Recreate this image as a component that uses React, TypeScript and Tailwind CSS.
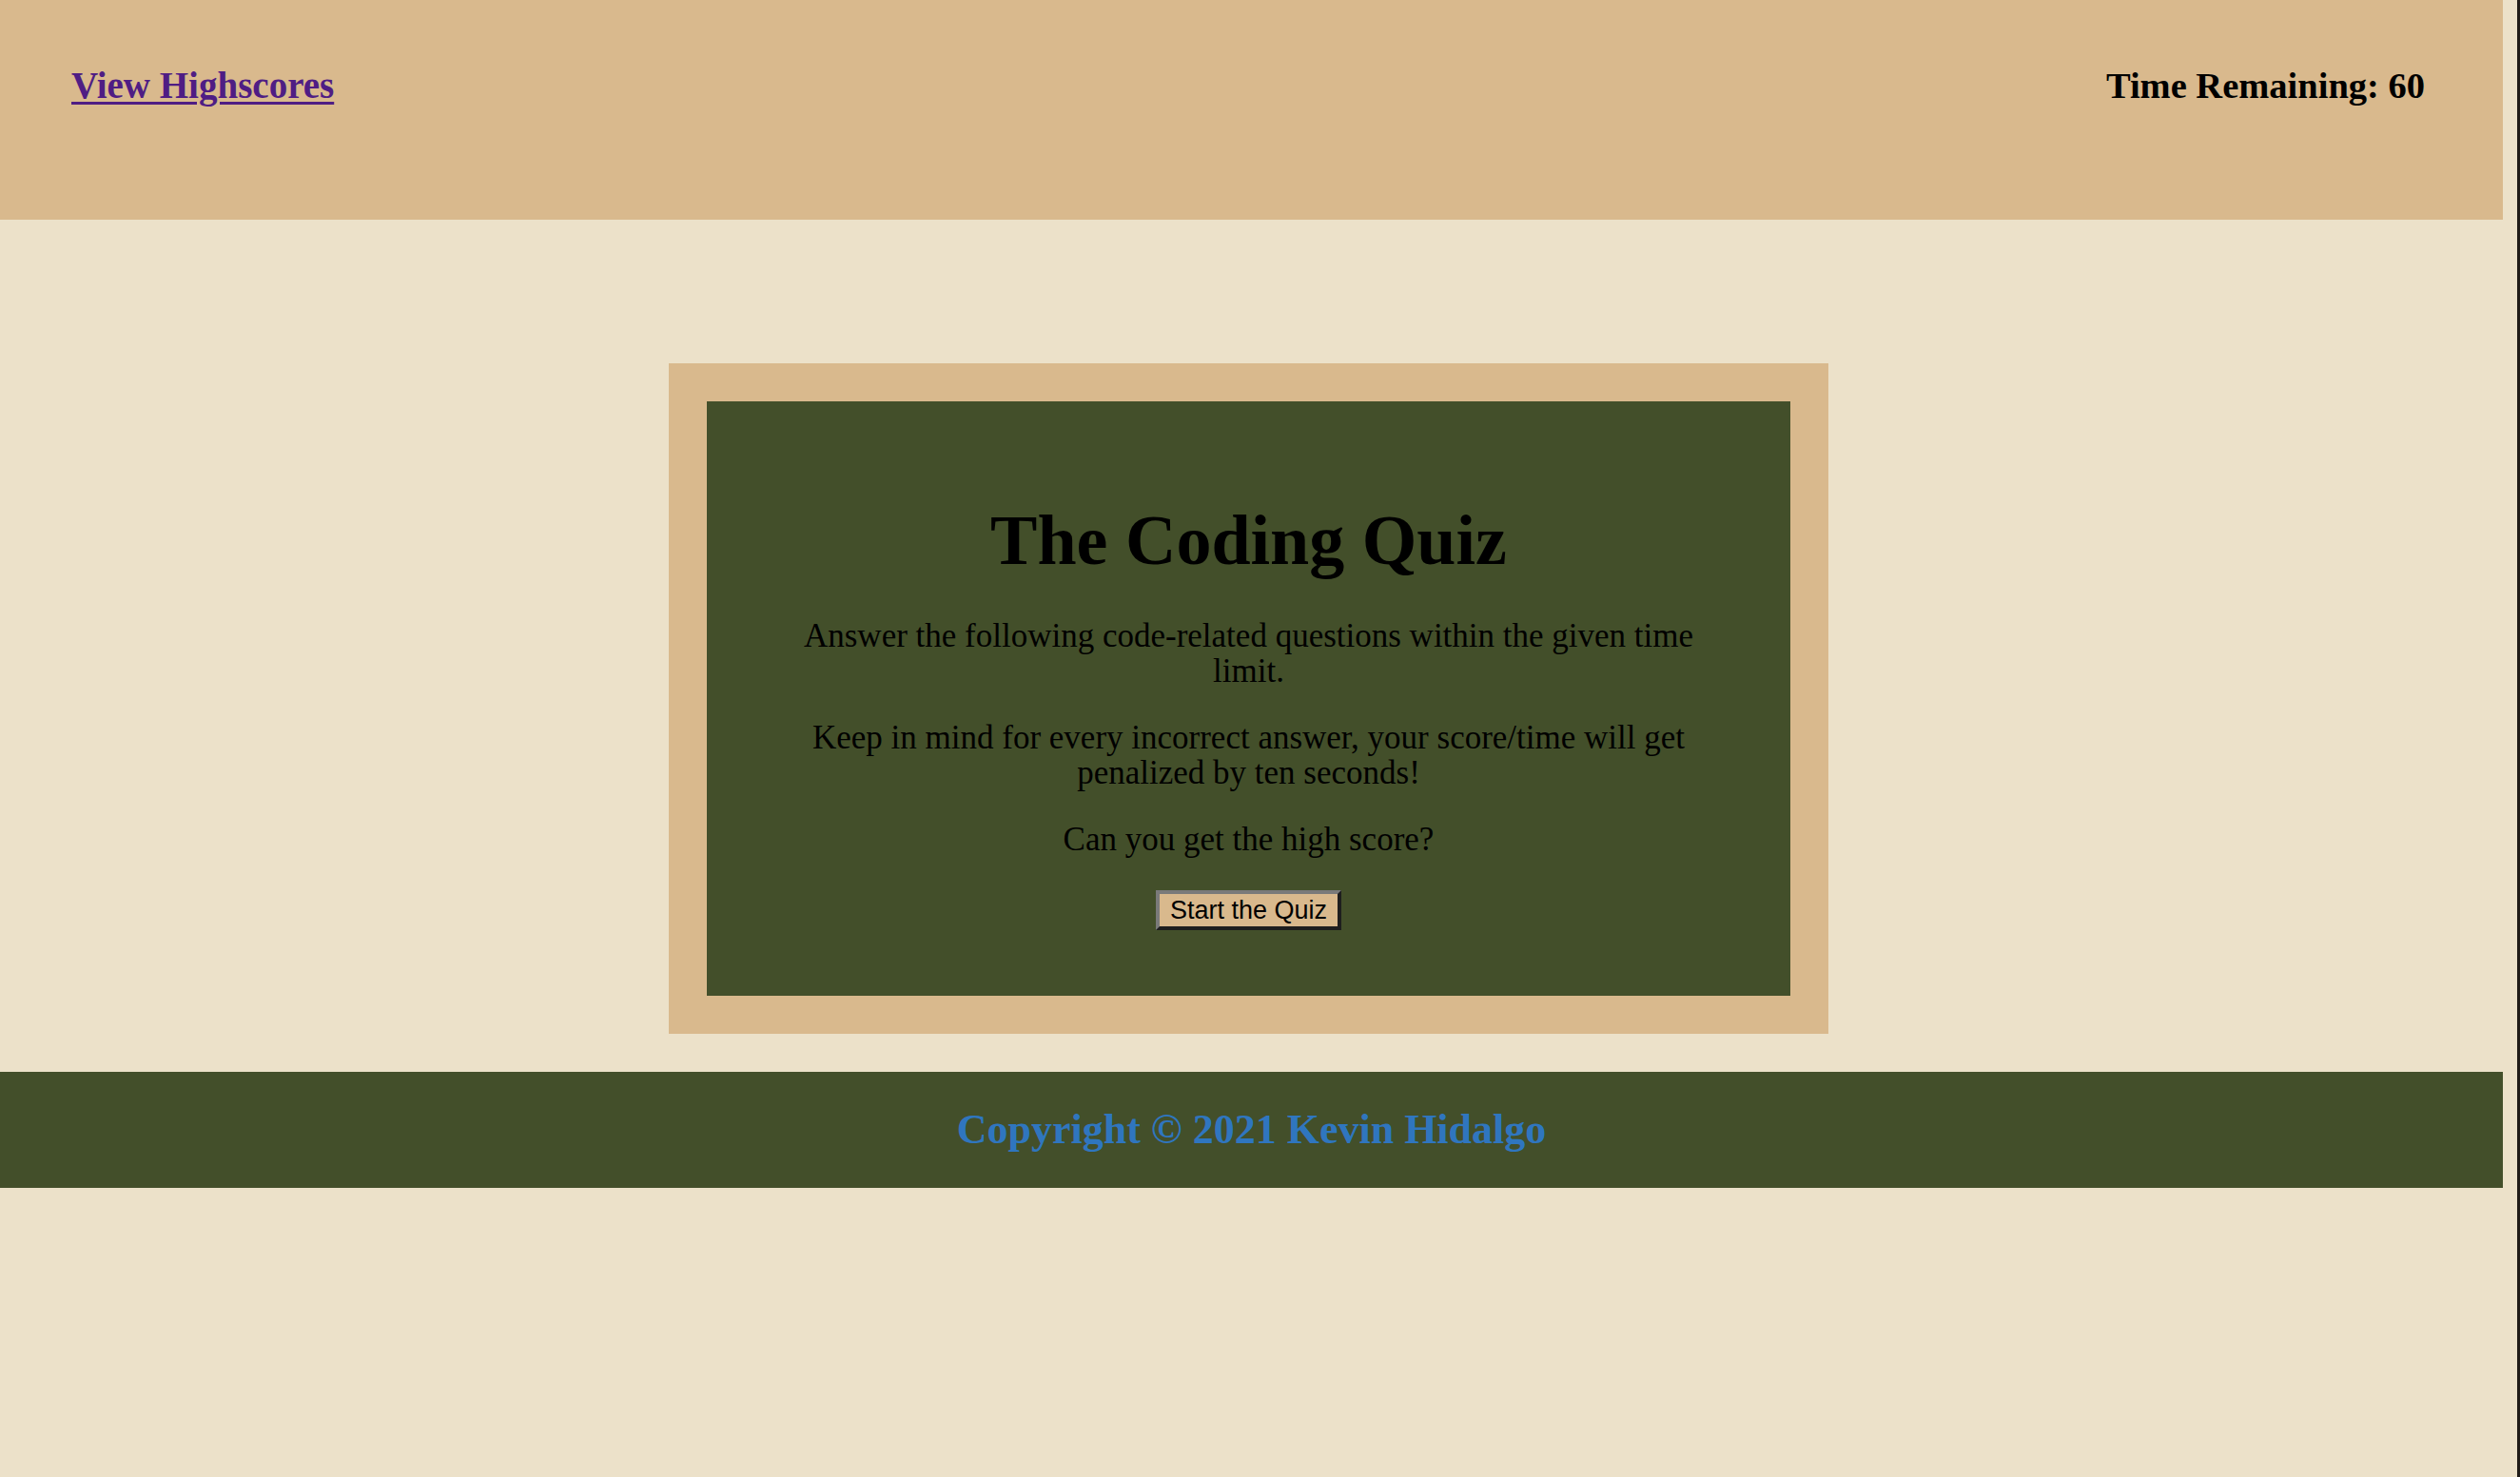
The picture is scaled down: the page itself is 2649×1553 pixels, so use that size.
import React from "react";

const serif = "font-['Liberation_Serif',_'Times_New_Roman',_serif]";

const App: React.FC = () => {
  const handleStart = () => {
    // quiz would start here
  };

  return (
    <div className="min-h-screen w-full bg-[#ECE1C9] flex border-r-[3px] border-[#1f1b17]">
      <div className={`w-[2631px] flex flex-col ${serif}`}>
        {/* Header */}
        <header className="h-[231px] bg-[#D9B98D] flex justify-between items-start pt-[67px] pl-[75px] pr-[82px]">
          <a
            href="#"
            className="text-[39px] leading-[46px] font-bold text-[#4f1d84] underline decoration-[3px] underline-offset-[4px]"
          >
            View Highscores
          </a>
          <div className="text-[38.5px] leading-[46px] font-bold text-black">Time Remaining: 60</div>
        </header>

        {/* Quiz card */}
        <main className="mt-[151px] flex justify-center pr-[6px]">
          <div className="w-[1219px] bg-[#D9B98D] p-[40px]">
            <div className="bg-[#434F2A] pt-[104px] pb-[69px] px-[80px] text-center text-black">
              <h1 className="text-[74px] leading-[84px] font-bold">The Coding Quiz</h1>
              <div className="mt-[40px] flex flex-col gap-[33px] text-[35px] leading-[37px]">
                <p>Answer the following code-related questions within the given time limit.</p>
                <p>Keep in mind for every incorrect answer, your score/time will get penalized by ten seconds!</p>
                <p>Can you get the high score?</p>
              </div>
              <button
                onClick={handleStart}
                className="mt-[35px] h-[42px] px-[11px] bg-[#D9B98D] border-4 border-t-[#7a7a7a] border-l-[#7a7a7a] border-b-[#1e1e1e] border-r-[#1e1e1e] font-['Liberation_Sans',_Arial,_sans-serif] text-[27px] leading-[34px] text-black"
              >
                Start the Quiz
              </button>
            </div>
          </div>
        </main>

        {/* Footer */}
        <footer className="mt-[40px] h-[122px] bg-[#434F2A] flex items-center justify-center">
          <h3 className="text-[44px] font-bold text-[#2f76bf]">Copyright © 2021 Kevin Hidalgo</h3>
        </footer>
      </div>
    </div>
  );
};

export default App;
